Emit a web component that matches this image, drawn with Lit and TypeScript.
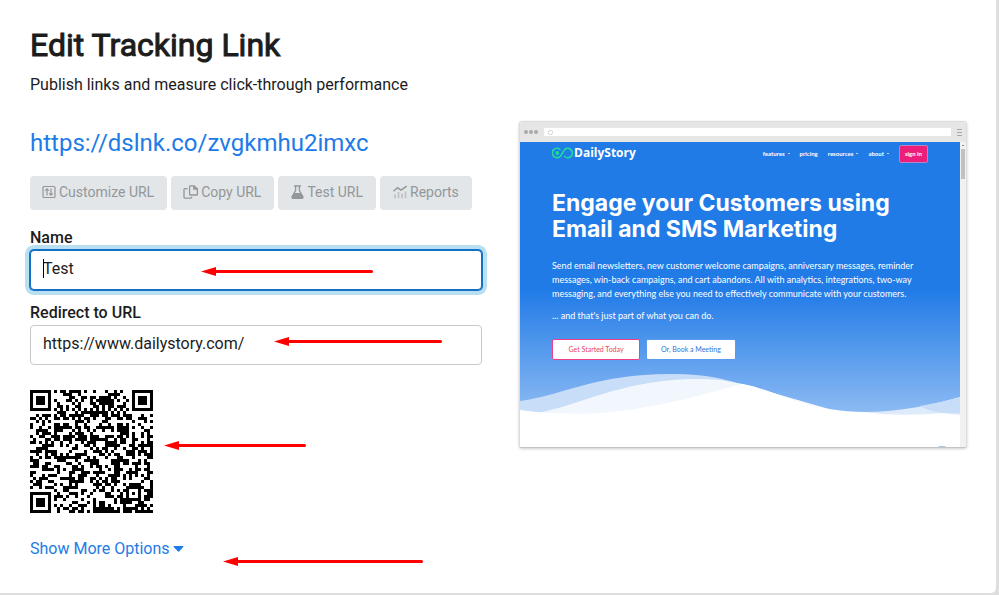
import { LitElement, html, css, svg } from "lit";
import { customElement, property, state } from "lit/decorators.js";

/* ---------- QR code, version 6, error correction level H ---------- */

const QR_SIZE = 41;
const QR_BLOCKS = 4;
const QR_DATA = 15;
const QR_ECC = 28;

function gfMul(a: number, b: number): number {
  let r = 0;
  for (let i = 7; i >= 0; i--) {
    r = (r << 1) ^ ((r >>> 7) * 0x11d);
    r ^= ((b >>> i) & 1) * a;
  }
  return r;
}

function generator(degree: number): number[] {
  const g = new Array(degree).fill(0);
  g[degree - 1] = 1;
  let root = 1;
  for (let i = 0; i < degree; i++) {
    for (let j = 0; j < degree; j++) {
      g[j] = gfMul(g[j], root);
      if (j + 1 < degree) g[j] ^= g[j + 1];
    }
    root = gfMul(root, 2);
  }
  return g;
}

function remainder(data: number[], g: number[]): number[] {
  const r: number[] = g.map(() => 0);
  for (const b of data) {
    const f = b ^ (r.shift() as number);
    r.push(0);
    g.forEach((c, i) => (r[i] ^= gfMul(c, f)));
  }
  return r;
}

function codewords(text: string): number[] {
  const bits: number[] = [];
  const push = (v: number, n: number) => {
    for (let i = n - 1; i >= 0; i--) bits.push((v >>> i) & 1);
  };
  push(4, 4);
  push(text.length, 8);
  for (const ch of text) push(ch.charCodeAt(0), 8);
  push(0, 4);
  const data: number[] = [];
  for (let i = 0; i < bits.length; i += 8) {
    data.push(parseInt(bits.slice(i, i + 8).join(""), 2));
  }
  for (let pad = 0xec; data.length < QR_BLOCKS * QR_DATA; pad ^= 0xec ^ 0x11) data.push(pad);
  const g = generator(QR_ECC);
  const blocks = Array.from({ length: QR_BLOCKS }, (_, i) => {
    const d = data.slice(i * QR_DATA, (i + 1) * QR_DATA);
    return [...d, ...remainder(d, g)];
  });
  const out: number[] = [];
  for (let i = 0; i < QR_DATA + QR_ECC; i++) for (const b of blocks) out.push(b[i]);
  return out;
}

function qrPath(text: string): string {
  const n = QR_SIZE;
  const m: (boolean | undefined)[][] = Array.from({ length: n }, () => new Array(n).fill(undefined));
  const set = (x: number, y: number, v: boolean) => {
    if (x >= 0 && y >= 0 && x < n && y < n) m[y][x] = v;
  };
  for (let i = 0; i < n; i++) {
    set(6, i, i % 2 === 0);
    set(i, 6, i % 2 === 0);
  }
  for (const [cx, cy] of [[3, 3], [n - 4, 3], [3, n - 4]]) {
    for (let dy = -4; dy <= 4; dy++)
      for (let dx = -4; dx <= 4; dx++) {
        const d = Math.max(Math.abs(dx), Math.abs(dy));
        set(cx + dx, cy + dy, d !== 2 && d !== 4);
      }
  }
  for (let dy = -2; dy <= 2; dy++)
    for (let dx = -2; dx <= 2; dx++) set(34 + dx, 34 + dy, Math.max(Math.abs(dx), Math.abs(dy)) !== 1);

  const format = 2 << 3;
  let rem = format;
  for (let i = 0; i < 10; i++) rem = (rem << 1) ^ ((rem >>> 9) * 0x537);
  const fb = ((format << 10) | rem) ^ 0x5412;
  const bit = (i: number) => ((fb >>> i) & 1) === 1;
  for (let i = 0; i <= 5; i++) set(8, i, bit(i));
  set(8, 7, bit(6));
  set(8, 8, bit(7));
  set(7, 8, bit(8));
  for (let i = 9; i < 15; i++) set(14 - i, 8, bit(i));
  for (let i = 0; i < 8; i++) set(n - 1 - i, 8, bit(i));
  for (let i = 8; i < 15; i++) set(8, n - 15 + i, bit(i));
  set(8, n - 8, true);

  const words = codewords(text);
  let k = 0;
  for (let right = n - 1; right >= 1; right -= 2) {
    if (right === 6) right = 5;
    for (let v = 0; v < n; v++) {
      for (let j = 0; j < 2; j++) {
        const x = right - j;
        const y = ((right + 1) & 2) === 0 ? n - 1 - v : v;
        if (m[y][x] !== undefined) continue;
        const on = k < words.length * 8 && ((words[k >>> 3] >>> (7 - (k & 7))) & 1) === 1;
        m[y][x] = on !== ((x + y) % 2 === 0);
        k++;
      }
    }
  }
  let d = "";
  m.forEach((row, y) => row.forEach((v, x) => { if (v) d += `M${x} ${y}h1v1h-1z`; }));
  return d;
}

@customElement("qr-code")
export class QrCode extends LitElement {
  @property() value = "";
  static styles = css`
    :host { display: block; width: 123px; height: 123px; }
    svg { display: block; width: 100%; height: 100%; }
  `;
  render() {
    return html`<svg viewBox="0 0 41 41" shape-rendering="crispEdges" role="img" aria-label="QR code">
      <path d=${qrPath(this.value)} fill="#000"></path>
    </svg>`;
  }
}

/* ---------- Red pointer arrow ---------- */

@customElement("pointer-arrow")
export class PointerArrow extends LitElement {
  static styles = css`
    :host { display: flex; align-items: center; height: 9px; pointer-events: none; }
    svg { display: block; flex: none; width: 15px; height: 9px; }
    span { flex: 1; height: 3px; background: #f00; border-radius: 0 2px 2px 0; }
  `;
  render() {
    return html`<svg viewBox="0 0 15 9"><path d="M0 4.5 15 0v9z" fill="#f00"></path></svg><span></span>`;
  }
}

/* ---------- Preview of the destination page ---------- */

@customElement("page-preview")
export class PagePreview extends LitElement {
  static styles = css`
    :host {
      display: block;
      box-sizing: border-box;
      border: 1px solid #dcdcdc;
      border-bottom-color: #c4c4c4;
      border-radius: 3px;
      box-shadow: 0 1px 3px rgba(0, 0, 0, 0.2);
      background: #fff;
      overflow: hidden;
      font-family: Lato, sans-serif;
    }
    .bar { display: flex; align-items: center; height: 20px; padding: 0 4px; gap: 6px; background: #e6e6e6; }
    .dots { display: flex; gap: 1px; }
    .dots i { width: 4px; height: 4px; border-radius: 2px; background: #a9a9a9; }
    .address { flex: 1; display: flex; align-items: center; height: 8px; padding-left: 4px; background: #fff; }
    .address i { box-sizing: border-box; width: 5px; height: 5px; border: 1px dotted #b5b5b5; border-radius: 3px; }
    .menu { width: 5px; height: 5px; border: solid #a9a9a9; border-width: 1px 0; background: linear-gradient(#a9a9a9, #a9a9a9) center / 5px 1px no-repeat; }
    .view { display: flex; }
    .site { flex: 1; min-width: 0; background: linear-gradient(#217be7 0 148px, #94bff4 280px); color: #fff; }
    .scroll { width: 6px; box-sizing: border-box; padding: 3px 1px; background: #f1f1f1; }
    .scroll b { display: block; height: 1px; width: 2px; margin: 0 1px 3px; background: #888; }
    .scroll i { display: block; height: 30px; background: #c1c1c1; }
    .top { display: flex; align-items: center; justify-content: space-between; height: 16px; padding: 4px 32px 0; }
    .brand { display: flex; align-items: center; gap: 1px; margin-top: -2px; font-family: "Open Sans", sans-serif; font-weight: 700; font-size: 12px; line-height: 16px; color: #fff; text-decoration: none; }
    .brand svg { width: 21px; height: 12px; }
    nav { display: flex; align-items: center; gap: 10px; font-size: 6px; font-weight: 700; line-height: 8px; }
    nav a { color: #fff; text-decoration: none; }
    nav .drop::after { content: ""; display: inline-block; margin: 0 0 2px 3px; width: 2px; height: 1px; background: #b9d6f8; }
    nav .sign { box-sizing: border-box; padding: 4px 5px; border: 1px solid #b088c8; border-radius: 2px; background: #ed1e79; }
    .copy { padding: 28px 32px 0; }
    h2 { margin: 0 0 17px; font-family: Inter, sans-serif; font-size: 23px; font-weight: 700; line-height: 26px; white-space: nowrap; }
    p { margin: 0 0 8px; font-size: 9px; line-height: 14px; white-space: nowrap; }
    .cta { display: flex; gap: 6px; margin-top: 16px; }
    .cta a { box-sizing: border-box; height: 21px; border: 1px solid #ed3f8a; border-radius: 2px; background: #fff; color: #ea3f67; font-size: 7px; line-height: 19px; text-align: center; text-decoration: none; width: 88px; }
    .cta a + a { width: 90px; border-color: #5a9bed; color: #2d72e0; }
    .waves { display: block; width: 100%; height: 80px; margin-top: 7px; }
  `;
  render() {
    return html`
      <div class="bar">
        <span class="dots"><i></i><i></i><i></i></span>
        <span class="address"><i></i></span>
        <span class="menu"></span>
      </div>
      <div class="view">
        <div class="site">
          <div class="top">
            <a class="brand" href="#">
              <svg viewBox="0 0 21 12" fill="none" stroke="#1fdc9b" stroke-width="1.7">
                <path d="M8.5 2.8A4.7 4.7 0 1 0 8.6 9C10 7.5 11 4.2 12.8 2.5A4.6 4.6 0 1 1 12.2 9"></path>
                <circle cx="5.3" cy="6" r="1.9" fill="#1fdc9b" stroke="none"></circle>
              </svg>
              DailyStory
            </a>
            <nav>
              <a class="drop" href="#">features</a>
              <a href="#">pricing</a>
              <a class="drop" href="#">resources</a>
              <a class="drop" href="#">about</a>
              <a class="sign" href="#">sign in</a>
            </nav>
          </div>
          <div class="copy">
            <h2>Engage your Customers using<br />Email and SMS Marketing</h2>
            <p>
              Send email newsletters, new customer welcome campaigns, anniversary messages, reminder<br />
              messages, win-back campaigns, and cart abandons. All with analytics, integrations, two-way<br />
              messaging, and everything else you need to effectively communicate with your customers.
            </p>
            <p>... and that's just part of what you can do.</p>
            <div class="cta"><a href="#">Get Started Today</a><a href="#">Or, Book a Meeting</a></div>
          </div>
          <svg class="waves" viewBox="0 0 440 80" preserveAspectRatio="none">
            <path d="M0 34C45 28 75 7 150 7C190 7 205 13 222 17L440 80H0z" fill="#c7ddf8"></path>
            <path d="M0 43Q12 46 22 45L0 50z" fill="#deebfb"></path>
            <path d="M0 49C55 43 95 12 180 12C200 12 212 15 222 17L440 80H0z" fill="#f2f7fe"></path>
            <path d="M345 45C380 45 412 38 440 30V80H345z" fill="#deebfb"></path>
            <path d="M400 39Q420 36 440 30V46Q415 48 400 39" fill="#c7ddf8"></path>
            <path d="M0 43C80 54 140 40 222 17C255 22 280 44 345 45C370 49 400 48 422 46L440 48V80H0z" fill="#fff"></path>
            <path d="M0 50L22 46L60 47V80H0z" fill="#fff"></path>
            <ellipse cx="422" cy="80" rx="4" ry="1" fill="#9cc2ee"></ellipse>
          </svg>
        </div>
        <div class="scroll"><b></b><i></i></div>
      </div>
    `;
  }
}

/* ---------- Toolbar icons ---------- */

const icons = {
  customize: svg`<svg viewBox="0 0 15 14" fill="none" stroke="currentColor" stroke-width="1.2"><rect x="1" y="1.5" width="12" height="11" rx="1"></rect><path d="M5 10.5V4M3.2 5.7 5 3.8l1.8 1.9M9 3.5V10M7.2 8.3 9 10.2l1.8-1.9"></path></svg>`,
  copy: svg`<svg class="wide" viewBox="0 0 16 14" fill="none" stroke="currentColor" stroke-width="1.3"><path d="M6.6.8H11L14.4 3.8V9.3Q14.4 10 13.7 10H7.3Q6.6 10 6.6 9.3V1.5Q6.6.8 7.3.8M10.8 1V4H14.4M4.7 3.6H2Q1 3.6 1 4.6V12Q1 13.2 2.2 13.2H7.6Q8.8 13.2 8.8 11.8"></path></svg>`,
  test: svg`<svg viewBox="0 0 15 14" fill="none" stroke="currentColor"><path d="M4 .9H11" stroke-width="1.4"></path><path d="M5.6 1V5.5L2.3 11.2Q1.5 13.3 3.3 13.3H11.7Q13.5 13.3 12.7 11.2L9.4 5.5V1" stroke-width="1.3"></path><path d="M4 8.5H11L12.9 12 12.3 13.2H2.7L2.1 12z" fill="currentColor"></path></svg>`,
  reports: svg`<svg class="wide" viewBox="0 0 16 14" fill="none" stroke="currentColor"><path d="M1.5 6.2 5.5 2.8 9 5.2 14.7 1.2" stroke-width="1.5"></path><path d="M3 13.2V9.2M6.5 13.2V7M10 13.2V8.5M13.5 13.2V6.5" stroke-width="1.7" opacity=".45"></path></svg>`,
};

/* ---------- Page ---------- */

@customElement("app-root")
export class AppRoot extends LitElement {
  @state() private name = "Test";
  @state() private target = "https://www.dailystory.com/";

  static styles = css`
    :host { display: block; padding: 0 3px 2px 0; background: #dedede; font: 400 16px/24px Roboto, sans-serif; color: #1c1c1c; }
    .card { padding: 26px 29px 32px 30px; background: #fff; border-radius: 0 0 5px 0; }
    h1 { margin: 0 0 9px; font-size: 32px; font-weight: 400; line-height: 38px; -webkit-text-stroke: 1px currentColor; }
    .lead { margin: 0; }
    a { color: #217be7; text-decoration: none; }
    .columns { display: grid; grid-template-columns: 1fr 1fr; gap: 33px; align-items: start; margin-top: 28px; }
    .short { display: block; font-size: 24px; line-height: 36px; }
    .actions { display: flex; gap: 4px; margin: 15px 0 16px; }
    .actions button { display: flex; align-items: center; gap: 2px; height: 34px; padding: 0 13px 2px 12px; border: 0; border-radius: 4px; background: #e2e6e9; color: #939799; font: 400 14px/20px Roboto, sans-serif; white-space: nowrap; }
    .actions svg { display: block; width: 15px; height: 14px; }
    .actions .wide { width: 16px; }
    .field { position: relative; margin-bottom: 11px; }
    label { display: block; font-weight: 500; line-height: 24px; }
    input { display: block; box-sizing: border-box; width: 100%; height: 40px; margin: 0; padding: 5px 12px 9px; border: 1px solid #c9c9c9; border-radius: 4px; background: #fff; color: inherit; font: inherit; outline: none; }
    .active input { border-color: #1571c5; box-shadow: 0 0 0 1px #1571c5, 0 0 0 5px #b9e0f0; }
    .caret { position: absolute; left: 13px; top: 33px; width: 1px; height: 19px; background: #000; }
    .code { position: relative; margin: 25px 0 24px; }
    .more { position: relative; }
    .more a { display: inline-flex; align-items: center; gap: 3px; }
    .more svg { width: 11px; height: 6px; }
    .preview { margin: -4px 0 0 4px; }
    pointer-arrow { position: absolute; }
    .at-name { left: 171px; top: 41px; width: 172px; }
    .at-url { left: 244px; top: 36px; width: 168px; }
    .at-code { left: 134px; top: 51px; width: 142px; }
    .at-more { left: 193px; top: 20px; width: 200px; }
  `;

  render() {
    return html`
      <main class="card">
        <h1>Edit Tracking Link</h1>
        <p class="lead">Publish links and measure click-through performance</p>
        <div class="columns">
          <section>
            <a class="short" href="https://dslnk.co/zvgkmhu2imxc">https://dslnk.co/zvgkmhu2imxc</a>
            <div class="actions">
              <button type="button">${icons.customize}Customize URL</button>
              <button type="button">${icons.copy}Copy URL</button>
              <button type="button">${icons.test}Test URL</button>
              <button type="button">${icons.reports}Reports</button>
            </div>
            <div class="field active">
              <label for="name">Name</label>
              <input id="name" type="text" .value=${this.name} @input=${(e: Event) => (this.name = (e.target as HTMLInputElement).value)} />
              <span class="caret"></span>
              <pointer-arrow class="at-name"></pointer-arrow>
            </div>
            <div class="field">
              <label for="target">Redirect to URL</label>
              <input id="target" type="text" .value=${this.target} @input=${(e: Event) => (this.target = (e.target as HTMLInputElement).value)} />
              <pointer-arrow class="at-url"></pointer-arrow>
            </div>
            <div class="code">
              <qr-code value="https://dslnk.co/zvgkmhu2imxc"></qr-code>
              <pointer-arrow class="at-code"></pointer-arrow>
            </div>
            <div class="more">
              <a href="#">Show More Options<svg viewBox="0 0 11 6"><path d="M1 0H10Q11 .3 10.3 1L6 5.6Q5.5 6 5 5.6L.7 1Q0 .3 1 0" fill="#217be7"></path></svg></a>
              <pointer-arrow class="at-more"></pointer-arrow>
            </div>
          </section>
          <page-preview class="preview"></page-preview>
        </div>
      </main>
    `;
  }
}
